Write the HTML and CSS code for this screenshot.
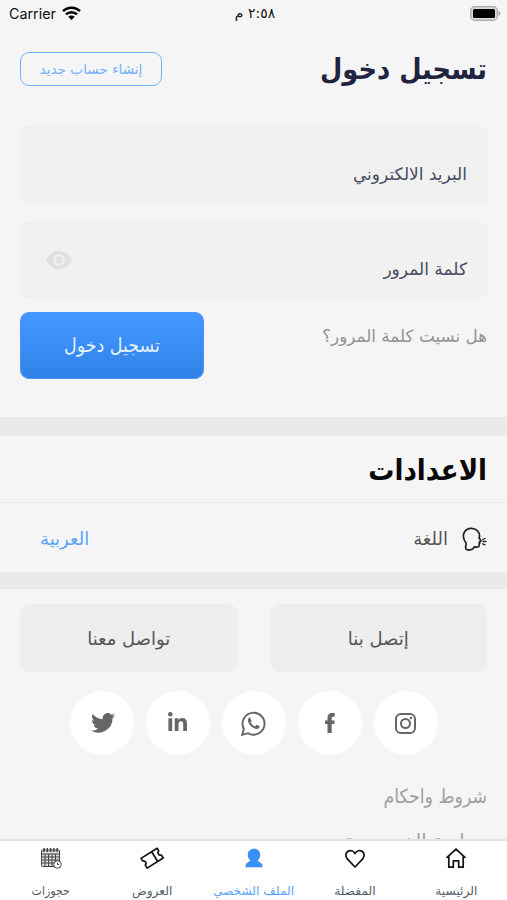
FILE: index.html
```
<!DOCTYPE html>
<html lang="ar" dir="rtl">
<head>
    <meta charset="UTF-8">
    <meta name="viewport" content="width=device-width, initial-scale=1.0">
    <title>تسجيل دخول</title>
    <link rel="stylesheet" href="styles.css">
</head>
<body>
    <div class="status-bar" dir="ltr">
        <div class="carrier">
            <span>Carrier</span>
            <svg width="19" height="14" viewBox="0 0 19 14" fill="none" stroke="#000" stroke-width="2.5">
                <path d="M1 5.2a12 12 0 0 1 17 0"/>
                <path d="M4 8.4a7.8 7.8 0 0 1 11 0"/>
                <path d="M9.5 14 6.3 10.8a4.6 4.6 0 0 1 6.4 0z" fill="#000" stroke="none"/>
            </svg>
        </div>
        <div class="time" dir="rtl">٢:٥٨ م</div>
        <svg class="battery" width="31" height="15" viewBox="0 0 31 15">
            <rect x=".7" y=".7" width="26.6" height="13.6" rx="4" fill="#d8d8d8" stroke="#a9a9a9" stroke-width="1.3"/>
            <rect x="3" y="3" width="22" height="9" rx="1.5"/>
            <path d="M28.5 5v5q2-.8 2-2.500t-2-2.500z" fill="#a9a9a9"/>
        </svg>
    </div>

    <main class="content">
        <section class="login">
            <div class="login-header">
                <h1>تسجيل دخول</h1>
                <a class="register-btn" href="#">إنشاء حساب جديد</a>
            </div>
            <div class="field"><span>البريد الالكتروني</span></div>
            <div class="field">
                <span>كلمة المرور</span>
                <svg class="eye" width="26" height="18" viewBox="0 0 26 18">
                    <path d="M0 9Q4.500 0 13 0t13 9q-4.500 9-13 9T0 9z" fill="#e0e0e0"/>
                    <circle cx="13" cy="9" r="4.800" fill="#e0e0e0" stroke="#f1f1f1" stroke-width="2"/>
                </svg>
            </div>
            <div class="login-actions">
                <a class="forgot" href="#">هل نسيت كلمة المرور؟</a>
                <button class="login-btn">تسجيل دخول</button>
            </div>
        </section>

        <section class="settings">
            <h2>الاعدادات</h2>
            <div class="language">
                <svg width="25" height="24" viewBox="0 0 25 24" fill="none" stroke="#222" stroke-width="1.700" stroke-linecap="round" stroke-linejoin="round">
                    <path d="M4 22q-.9-2.200.1-4.200.4-2-1.500-4.100C-.6 7.500 3 1.500 9 1.300c5.200-.2 8.700 3.500 8.600 8.100l-.6 1.300 2 3.200-1.600.9.400 1.300-.7.700.1 1.900q-.3 1.500-2 1.400l-2.800-.3-1.700 2.300Q7 24 4 22z"/>
                    <path d="M20.500 12.500l2.500-1M21 14.500h3M20.500 16.800l2.500 1" stroke-width="1.300"/>
                </svg>
                <span>اللغة</span>
                <a href="#">العربية</a>
            </div>
        </section>

        <section class="contact">
            <div class="contact-btns">
                <a href="#">إتصل بنا</a>
                <a href="#">تواصل معنا</a>
            </div>
            <div class="social">
                <a href="#">
                    <svg width="21" height="21" viewBox="0 0 21 21" fill="none" stroke="#666" stroke-width="2">
                        <rect x="1" y="1" width="19" height="19" rx="5"/>
                        <circle cx="10.500" cy="10.500" r="4.500"/>
                        <circle cx="16" cy="5" r="1.300" fill="#666" stroke="none"/>
                    </svg>
                </a>
                <a href="#">
                    <svg width="10" height="20" viewBox="0 0 10 20" fill="#666">
                        <path d="M2.500 20V11H0V7.400h2.500V5Q2.500 0 7 0h2.700v3.700H8Q6.700 3.700 6.700 5v2.400h3L9.300 11H6.700v9z"/>
                    </svg>
                </a>
                <a href="#">
                    <svg width="25" height="25" viewBox="0 0 25 25" fill="none" stroke="#666" stroke-width="1.900">
                        <path d="M1.200 23.800l1.600-6A11 11 0 1 1 7 22.200z"/>
                        <path d="M8.800 6.300q-1.800.5-1.800 2.600c0 4.100 4.600 8.800 8.700 9 2 0 3-1 2.900-2.700l-3-1.500-1.500 1.700q-3.200-1.300-4.600-4.200L10.700 10z" fill="#666" stroke="none"/>
                    </svg>
                </a>
                <a class="linkedin" href="#">
                    <svg width="19" height="19" viewBox="0 0 19 19" fill="#666">
                        <circle cx="2.300" cy="2.300" r="2.300"/>
                        <path d="M.4 6.200h3.800V19H.4zM6.700 6.200h3.700V8q1.200-2.100 3.900-2.100Q19 5.900 19 11.400V19h-3.800v-6.800q0-3-2.200-3-2.500 0-2.500 3V19H6.700z"/>
                    </svg>
                </a>
                <a class="twitter" href="#">
                    <svg width="24" height="20" viewBox="0 0 24 20" fill="#666">
                        <path d="M24 2.400a10 10 0 0 1-2.800.8A5 5 0 0 0 23.300.5a10 10 0 0 1-3.100 1.200 4.900 4.900 0 0 0-8.400 4.500A14 14 0 0 1 1.700 1a4.900 4.900 0 0 0 1.500 6.600A5 5 0 0 1 1 7a4.900 4.900 0 0 0 3.900 4.900 5 5 0 0 1-2.200.1 4.900 4.900 0 0 0 4.600 3.400A10 10 0 0 1 0 17.500a14 14 0 0 0 21.500-12.400A10 10 0 0 0 24 2.400z"/>
                    </svg>
                </a>
            </div>
            <div class="links">
                <a class="terms" href="#">شروط واحكام</a>
                <a class="privacy" href="#">سياسة الخصوصية</a>
            </div>
        </section>
    </main>

    <nav class="tab-bar">
        <a href="#">
            <svg width="22" height="22" viewBox="0 0 22 22" fill="none" stroke="#111" stroke-width="1.700" stroke-linejoin="round" stroke-linecap="round">
                <path d="M2 10.300 11 2.200l9 8.100M3.800 8.900v11.300h4.500v-6.400h5.400v6.400h4.500V8.900"/>
            </svg>
            <span>الرئيسية</span>
        </a>
        <a href="#">
            <svg width="22" height="22" viewBox="0 0 22 22" fill="none" stroke="#111" stroke-width="1.700" stroke-linejoin="round">
                <path d="M11 20 3.500 12.200C1.200 9.500 1.500 6.200 3.600 4.500 6 2.700 9.600 3.500 11 6.600c1.400-3.100 5-3.900 7.400-2.100 2.100 1.700 2.400 5 .1 7.700z"/>
            </svg>
            <span>المفضلة</span>
        </a>
        <a class="active" href="#">
            <svg width="22" height="22" viewBox="0 0 22 22" fill="#3b8ff5">
                <path d="M11 1.800c4 0 6.300 2.700 6.200 6.200-.1 2.300-1 4.200-2.600 5.500.4 1.300 4 1.700 4.700 4.300q.2 1.300.2 2.500h-17q0-1.200.2-2.500c.7-2.600 4.300-3 4.700-4.300C5.800 12.200 4.900 10.300 4.800 8 4.700 4.500 7 1.800 11 1.800z"/>
            </svg>
            <span>الملف الشخصي</span>
        </a>
        <a href="#">
            <svg width="26" height="22" viewBox="0 0 26 22" fill="none" stroke="#111" stroke-width="1.700" stroke-linejoin="round">
                <g transform="rotate(-32 13 11)">
                    <path d="M3.500 5.500h19v3a2.600 2.600 0 0 0 0 5v3.500h-19v-3.500a2.600 2.600 0 0 0 0-5z"/>
                    <path d="M16 5.500v11.500"/>
                </g>
            </svg>
            <span>العروض</span>
        </a>
        <a href="#">
            <svg width="22" height="22" viewBox="0 0 22 22" fill="none" stroke="#444" stroke-width="1">
                <rect x="1.500" y="3" width="18" height="16.500" rx="1" fill="#ddd"/>
                <path d="M1.500 7h18M1.500 10h18M1.500 13h18M1.500 16h18M5 7v12M8.500 7v12M12 7v12M15.500 7v12"/>
                <path d="M4 1v4M7.300 1v4M10.600 1v4M13.900 1v4M17.200 1v4" stroke-width="1.500"/>
                <circle cx="17.500" cy="17.500" r="3.800" fill="#fff"/>
                <path d="M17.500 15.500v2h1.700"/>
            </svg>
            <span class="bookings">حجوزات</span>
        </a>
    </nav>
</body>
</html>
```
FILE: styles.css
```
* {
    box-sizing: border-box;
}

body {
    margin: 0;
    height: 100vh;
    display: flex;
    flex-direction: column;
    background: #f5f5f5;
    color: #555;
    font-family: 'DejaVu Sans', sans-serif;
    overflow: hidden;
}

a {
    color: inherit;
    text-decoration: none;
}

span,
h1,
h2,
a {
    white-space: nowrap;
}

h1,
h2,
.login-btn,
.terms,
.bookings {
    font-stretch: condensed;
}

svg {
    display: block;
    flex-shrink: 0;
}

.status-bar {
    height: 28px;
    flex-shrink: 0;
    padding: 0 6px 2px 9px;
    display: grid;
    grid-template-columns: 1fr auto 1fr;
    align-items: center;
    color: #111;
}

.carrier {
    display: flex;
    align-items: center;
    gap: 6px;
    font-family: Inter, sans-serif;
    font-size: 14.3px;
}

.time {
    font-size: 14px;
}

.battery {
    justify-self: end;
}

.content {
    flex: 1;
    min-height: 0;
    overflow: hidden;
}

.login {
    height: 389px;
    padding: 24px 20px 0;
}

.login-header {
    display: flex;
    justify-content: space-between;
    align-items: center;
    height: 34px;
    margin-bottom: 40px;
}

h1 {
    margin: 0;
    font-size: 28.6px;
    color: #1f2540;
}

.register-btn {
    width: 142px;
    height: 34px;
    border: 1.5px solid #73b1fa;
    border-radius: 9px;
    color: #73b1fa;
    font-size: 13.6px;
    line-height: 33px;
    text-align: center;
}

.field {
    height: 77px;
    margin-bottom: 19px;
    padding: 18px 19px 0 25px;
    display: flex;
    justify-content: space-between;
    align-items: center;
    background: #f1f1f1;
    border: 1px solid #efefef;
    border-radius: 6px;
    color: #464b60;
    font-size: 17px;
}

.field + .field {
    height: 76px;
    margin-bottom: 14px;
}

.eye {
    margin-bottom: 18px;
}

.login-actions {
    display: flex;
    justify-content: space-between;
    align-items: flex-start;
}

.forgot {
    padding-top: 12px;
    font-size: 16.8px;
    line-height: 25px;
    color: #939393;
}

.login-btn {
    width: 184px;
    height: 67px;
    border: 1px solid #4595f5;
    border-radius: 9px;
    background: linear-gradient(#4497ff, #2f83e8);
    color: #e4f1ff;
    font-family: inherit;
    font-size: 19.4px;
}

.settings {
    height: 172px;
    border-top: 19px solid #eaeaea;
    border-bottom: 17px solid #eaeaea;
}

h2 {
    height: 67px;
    margin: 0;
    padding: 0 20px;
    border-bottom: 1px solid #ececec;
    font-size: 29px;
    line-height: 68px;
    color: #090909;
}

.language {
    height: 69px;
    padding: 2px 20px 0 40px;
    display: flex;
    align-items: center;
    gap: 14px;
    font-size: 18px;
}

.language a {
    margin-right: auto;
    color: #5ba4fb;
}

.contact {
    padding: 15px 20px 0;
}

.contact-btns {
    display: grid;
    grid-template-columns: 1fr 1fr;
    gap: 32px;
}

.contact-btns a {
    height: 68px;
    display: flex;
    justify-content: center;
    align-items: center;
    background: #eee;
    border-radius: 10px;
    font-size: 18px;
}

.social {
    margin-top: 19px;
    display: flex;
    justify-content: center;
    gap: 12px;
}

.social a {
    width: 64px;
    height: 64px;
    display: flex;
    justify-content: center;
    align-items: center;
    background: #fff;
    border-radius: 50%;
}

.social .linkedin {
    padding-bottom: 3px;
}

.social .twitter {
    padding-left: 3px;
}

.links {
    margin-top: 24px;
    display: flex;
    flex-direction: column;
    align-items: flex-start;
    gap: 9px;
    color: #a0a0a0;
    font-size: 19.3px;
    line-height: 36px;
}

.tab-bar {
    height: 61px;
    flex-shrink: 0;
    display: grid;
    grid-template-columns: repeat(5, 1fr);
    background: #fff;
    border-top: 2px solid #e4e4e4;
}

.tab-bar a {
    padding-top: 6px;
    display: flex;
    flex-direction: column;
    align-items: center;
    gap: 12px;
    font-size: 12.2px;
    line-height: 20px;
    color: #555b68;
}

.tab-bar .active {
    color: #5ba4fb;
}
```
